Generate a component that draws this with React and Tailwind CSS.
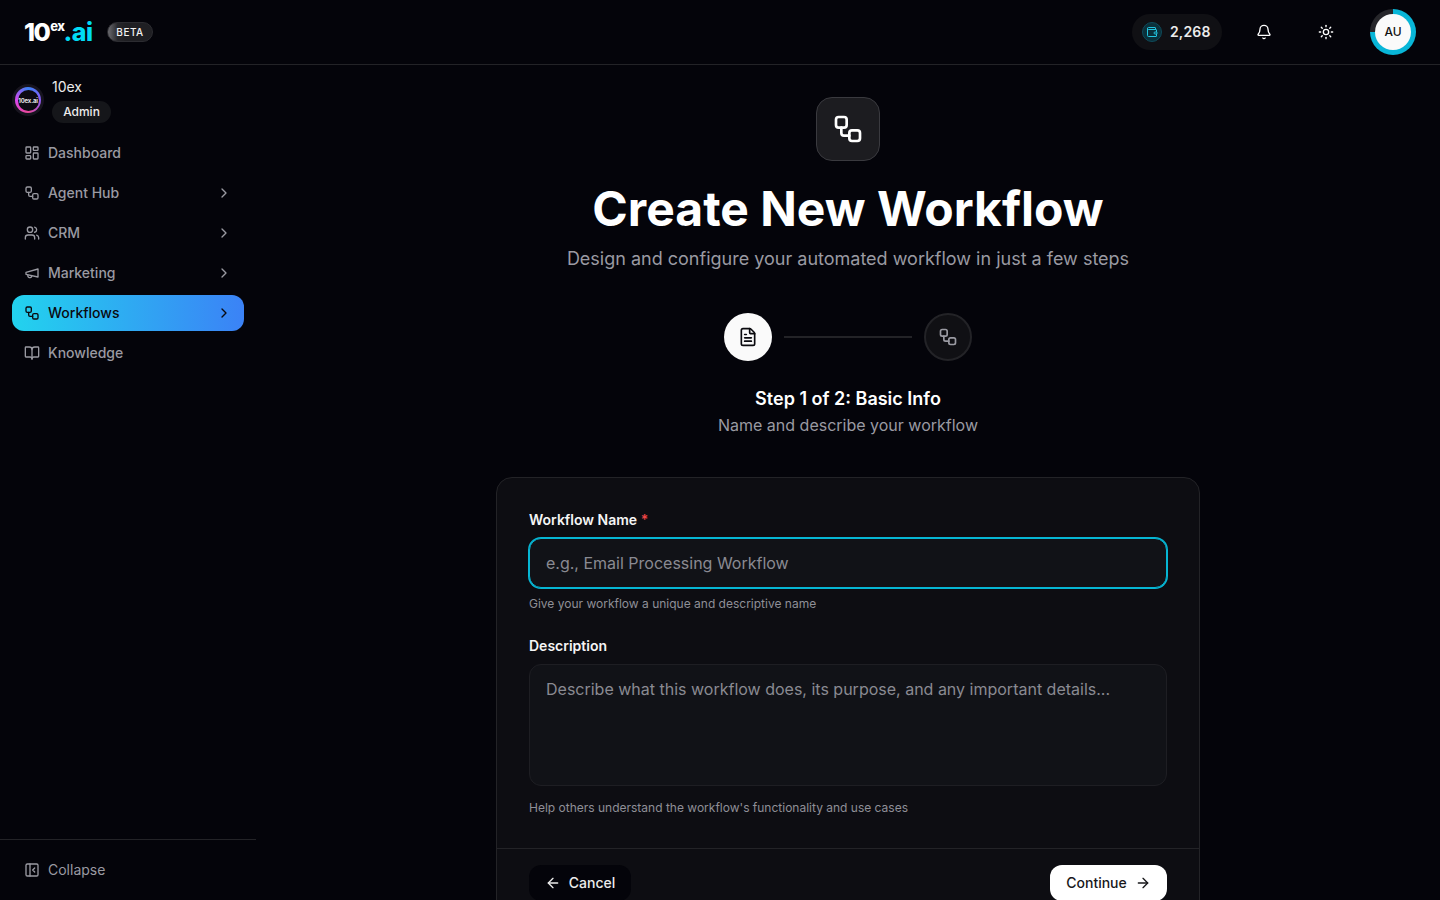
import React from "react";
import { LayoutDashboard, Workflow, Users, BookOpen, ChevronRight, PanelLeftClose, Wallet, Bell, Sun, FileText, ArrowLeft, ArrowRight } from "lucide-react";

function OldMegaphone({ className, strokeWidth = 2 }) {
  return (
    <svg viewBox="0 0 24 24" fill="none" stroke="currentColor" strokeWidth={strokeWidth} strokeLinecap="round" strokeLinejoin="round" className={className}>
      <path d="m3 11 18-5v12L3 14v-3z" />
      <path d="M11.6 16.8a3 3 0 1 1-5.8-1.6" />
    </svg>
  );
}

const nav = [
  { label: "Dashboard", Icon: LayoutDashboard },
  { label: "Agent Hub", Icon: Workflow, more: true },
  { label: "CRM", Icon: Users, more: true },
  { label: "Marketing", Icon: OldMegaphone, more: true },
  { label: "Workflows", Icon: Workflow, more: true, active: true },
  { label: "Knowledge", Icon: BookOpen },
];

function Header() {
  return (
    <header className="h-[65px] shrink-0 border-b border-[#232327] flex items-center pl-[24px] pr-6">
      <div className="flex items-center">
        <div className="w-[68px] flex items-start font-extrabold text-white leading-none tracking-[-0.1em] whitespace-nowrap">
          <span className="text-[25px] leading-[25px]">10</span>
          <span className="text-[13px] leading-[13px] ml-[1px] tracking-[-0.04em]">ex</span>
          <span className="text-[25px] leading-[25px] text-[#00dcf5] tracking-[-0.02em] -ml-[1px]">.ai</span>
        </div>
        <div className="ml-[15px] h-5 w-[46px] rounded-full border border-[#2c2c31] bg-[linear-gradient(90deg,#6b6b70_0%,#27272b_22%,#1f1f23_40%)] flex items-center justify-center text-[10px] font-medium tracking-[0.05em] text-[#f2f2f2]">BETA</div>
      </div>
      <div className="ml-auto flex items-center">
        <div className="h-9 w-[90px] rounded-full bg-[#101014] flex items-center pl-[10px]">
          <div className="w-5 h-5 rounded-full bg-[#0b303a] border border-[#0e4a5a] flex items-center justify-center">
            <Wallet className="w-3 h-3 text-[#22c5e0]" strokeWidth={2} />
          </div>
          <span className="ml-2 text-sm font-semibold tracking-[0.01em] text-[#ececec]">2,268</span>
        </div>
        <Bell className="ml-[34px] w-4 h-4 text-white" strokeWidth={2} />
        <Sun className="ml-[46px] w-4 h-4 text-white" strokeWidth={2} />
        <div className="ml-[36px] w-[46px] h-[46px] rounded-full bg-[conic-gradient(#08b6d8_0_75%,#26262a_75%_100%)] flex items-center justify-center">
          <div className="w-9 h-9 rounded-full bg-[#fafafa] flex items-center justify-center text-xs font-medium text-[#111]">AU</div>
        </div>
      </div>
    </header>
  );
}

function Sidebar() {
  return (
    <aside className="w-64 shrink-0 flex flex-col">
      <div className="flex items-center pl-3 pt-3">
        <div className="w-8 h-8 rounded-full bg-[#17141f] flex items-center justify-center">
          <div className="w-[26px] h-[26px] rounded-full bg-[conic-gradient(#3b82f6,#8b5cf6_90deg,#ec4899_180deg,#d946ef_270deg,#3b82f6)] flex items-center justify-center">
            <div className="w-[21px] h-[21px] rounded-full bg-[#0c0a12] flex items-center justify-center text-[6px] font-bold text-[#e5e5e5] tracking-[-0.03em] whitespace-nowrap">10ex.ai</div>
          </div>
        </div>
        <div className="ml-2">
          <div className="text-sm leading-5 text-[#ececec]">10ex</div>
          <div className="mt-1 h-[22px] w-[59px] rounded-full bg-[#15161a] flex items-center justify-center text-xs font-medium text-[#ececec]">Admin</div>
        </div>
      </div>
      <nav className="mt-3 px-3 flex flex-col gap-1">
        {nav.map(({ label, Icon, more, active }) => (
          <div key={label} className={`h-9 rounded-xl pl-3 pr-[12px] flex items-center text-sm font-medium ${active ? "bg-[linear-gradient(90deg,#22d3ee,#3b82f6)] text-[#0a0a0f]" : "text-[#9a9aa2]"}`}>
            <Icon className="w-4 h-4 shrink-0" strokeWidth={2} />
            <span className="ml-2">{label}</span>
            {more && <ChevronRight className="ml-auto w-4 h-4" strokeWidth={2} />}
          </div>
        ))}
      </nav>
      <div className="mt-auto h-[61px] border-t border-[#232327] flex items-center px-6 text-sm text-[#9a9aa2]">
        <PanelLeftClose className="w-4 h-4" strokeWidth={2} />
        <span className="ml-2">Collapse</span>
      </div>
    </aside>
  );
}

function Main() {
  return (
    <main className="flex-1 overflow-hidden flex flex-col items-center pt-8 text-center [&>*]:shrink-0">
      <div className="w-16 h-16 rounded-2xl bg-[#1c1c20] border border-[#3a3a3f] flex items-center justify-center">
        <Workflow className="w-8 h-8 text-white" strokeWidth={2} />
      </div>
      <h1 className="mt-6 text-5xl leading-12 font-bold text-white">Create New Workflow</h1>
      <p className="mt-3 text-lg leading-7 text-[#9a9aa2]">Design and configure your automated workflow in just a few steps</p>
      <div className="mt-10 flex items-center gap-3">
        <div className="w-12 h-12 rounded-full bg-[#fafafa] flex items-center justify-center">
          <FileText className="w-5 h-5 text-[#0a0a0f]" strokeWidth={2} />
        </div>
        <div className="w-32 h-[2px] bg-[#232327]" />
        <div className="w-12 h-12 rounded-full bg-[#101014] border-2 border-[#232327] flex items-center justify-center">
          <Workflow className="w-5 h-5 text-[#9a9aa2]" strokeWidth={2} />
        </div>
      </div>
      <h2 className="mt-6 text-lg leading-7 font-semibold text-white">Step 1 of 2: Basic Info</h2>
      <p className="text-base leading-6 text-[#9a9aa2]">Name and describe your workflow</p>
      <div className="mt-10 w-[704px] rounded-2xl border border-[#232327] bg-[#0d0d12] text-left">
        <div className="px-8 pt-8 pb-8">
          <label className="block text-sm leading-5 font-semibold text-[#f5f5f5]">Workflow Name <span className="text-[#ef4444]">*</span></label>
          <div className="mt-2 h-[50px] rounded-xl border border-[#06b6d4] ring-1 ring-[#06b6d4] bg-[#111217] flex items-center px-4 text-base text-[#8a8a92]">e.g., Email Processing Workflow</div>
          <p className="mt-2 text-xs leading-4 text-[#8f8f97]">Give your workflow a unique and descriptive name</p>
          <label className="mt-6 block text-sm leading-5 font-semibold text-[#f5f5f5]">Description</label>
          <div className="mt-2 h-[122px] rounded-xl border border-[#1e1e23] bg-[#111217] px-4 py-3 text-base leading-6 text-[#8a8a92]">Describe what this workflow does, its purpose, and any important details...</div>
          <p className="mt-[14px] text-xs leading-4 text-[#8f8f97]">Help others understand the workflow's functionality and use cases</p>
        </div>
        <div className="border-t border-[#232327] px-8 py-4 flex items-center justify-between">
          <div className="h-9 w-[102px] rounded-xl bg-[#04040a] flex items-center justify-center gap-2 text-sm font-medium text-[#ececec]">
            <ArrowLeft className="w-4 h-4" strokeWidth={2} />
            <span>Cancel</span>
          </div>
          <div className="h-9 w-[117px] rounded-xl bg-white flex items-center justify-center gap-2 text-sm font-medium text-[#18181b]">
            <span>Continue</span>
            <ArrowRight className="w-4 h-4" strokeWidth={2} />
          </div>
        </div>
      </div>
    </main>
  );
}

export default function App() {
  return (
    <div className="h-screen overflow-hidden flex flex-col bg-[#04040a] font-['Inter',sans-serif] antialiased">
      <Header />
      <div className="flex-1 flex min-h-0">
        <Sidebar />
        <Main />
      </div>
    </div>
  );
}
